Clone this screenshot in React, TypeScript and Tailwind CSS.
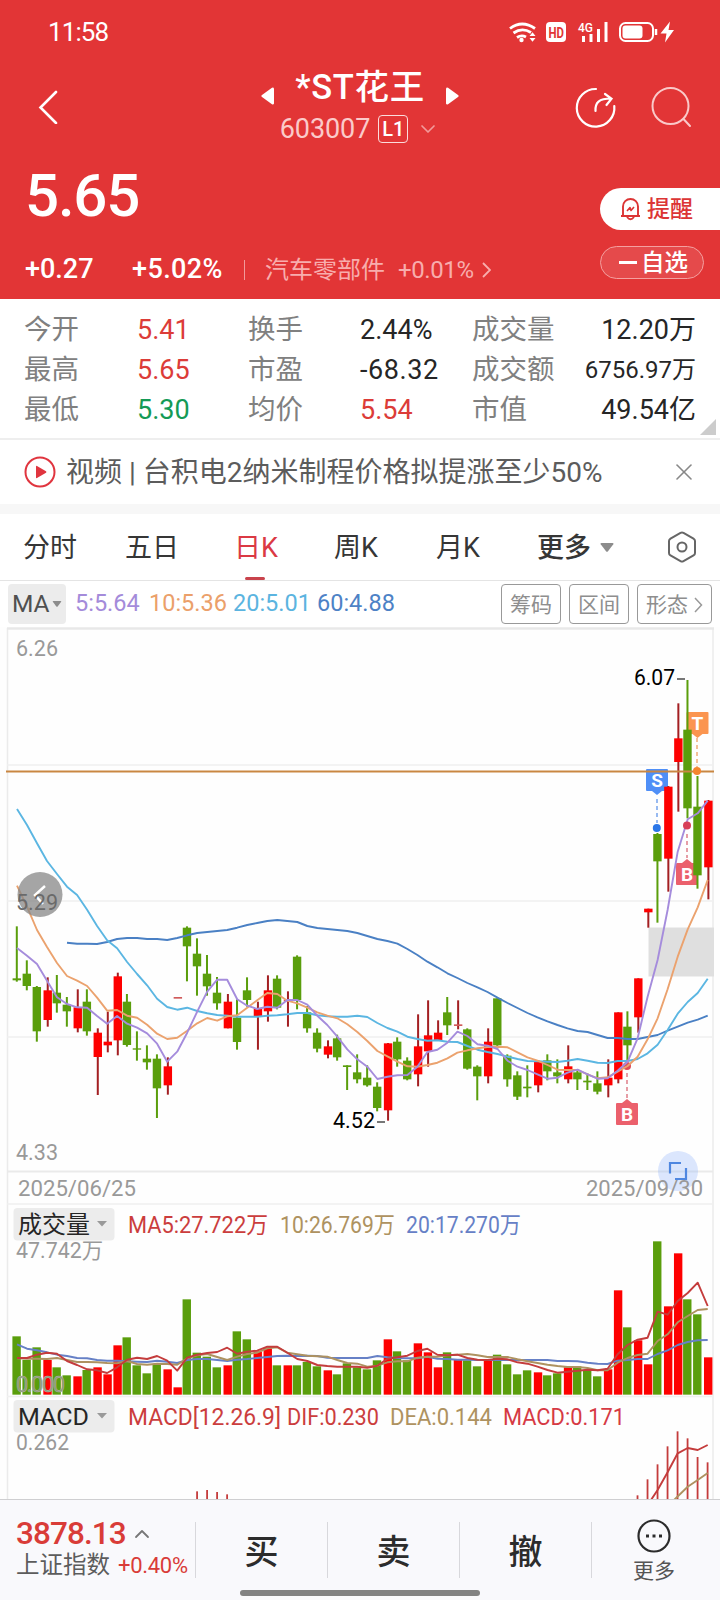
import type { ReactNode } from 'react'
import { ChevronDown, ChevronUp, X } from 'lucide-react'

const UP = '#fe0000'
const UP_WICK = '#a31f22'
const DOWN = '#5a9e0c'

const x = (i: number) => 17 + i * 10.01

// dir, high, body top, body bottom, low (chart ticks, a third of a pixel)
type Candle = [0 | 1, number, number, number, number]

const candles: Candle[] = [
  [0, 199, 355, 361, 365], [0, 301, 341, 378, 391], [0, 378, 381, 514, 545], [1, 352, 391, 480, 500],
  [0, 345, 398, 430, 458], [0, 411, 434, 454, 500], [1, 388, 442, 505, 517], [0, 388, 425, 514, 527],
  [1, 505, 518, 591, 705], [1, 455, 545, 556, 577], [1, 338, 349, 541, 586], [0, 402, 425, 555, 560],
  [0, 514, 565, 569, 602], [0, 556, 596, 607, 629], [0, 583, 596, 685, 774], [1, 592, 619, 676, 704],
  [1, 411, 411, 416, 416], [0, 199, 203, 259, 364], [0, 235, 281, 319, 407], [0, 285, 341, 379, 407],
  [0, 351, 398, 430, 449], [1, 402, 425, 505, 505], [0, 418, 473, 546, 569], [0, 352, 391, 420, 440],
  [1, 425, 445, 470, 569], [1, 346, 391, 454, 485], [0, 346, 356, 443, 448], [1, 394, 419, 424, 500],
  [0, 286, 290, 420, 448], [0, 438, 457, 505, 518], [0, 505, 518, 566, 577], [1, 541, 559, 584, 595],
  [0, 524, 535, 592, 602], [0, 616, 616, 621, 690], [0, 583, 637, 658, 670], [0, 616, 653, 676, 680],
  [0, 667, 680, 744, 754], [1, 549, 550, 751, 782], [0, 532, 545, 598, 620], [0, 592, 602, 658, 661],
  [1, 463, 559, 643, 679], [1, 421, 526, 574, 620], [1, 481, 518, 541, 541], [0, 411, 457, 496, 525],
  [1, 421, 493, 498, 508], [0, 505, 508, 626, 629], [0, 616, 620, 649, 721], [1, 505, 545, 649, 670],
  [0, 415, 415, 556, 566], [0, 583, 587, 658, 680], [0, 634, 646, 710, 720], [0, 616, 680, 685, 712],
  [1, 600, 604, 676, 697], [0, 583, 601, 634, 661], [0, 598, 637, 649, 670], [1, 556, 619, 658, 670],
  [0, 628, 637, 658, 690], [0, 640, 662, 667, 690], [0, 634, 670, 695, 703], [1, 598, 653, 676, 712],
  [1, 457, 457, 658, 670], [0, 454, 500, 556, 600], [1, 355, 355, 472, 518], [1, 146, 146, 157, 203],
  [0, -81, -78, 4, 188], [1, -222, -220, -4, 95], [1, -470, -365, -294, -145], [0, -540, -391, -155, -125],
  [0, -252, -160, 46, 86], [1, -180, -178, 22, 118],
]

const ma5 = [
  264, 287, 312, 362, 412, 432, 442, 443, 468, 491, 468, 491, 503, 520, 551, 605, 575, 518, 455, 395, 359, 359, 418,
  437, 447, 440, 443, 420, 420, 434, 467, 495, 530, 568, 598, 620, 657, 650, 646, 645, 620, 576, 569, 548, 515, 528,
  553, 557, 567, 602, 620, 630, 643, 656, 653, 638, 629, 643, 656, 655, 632, 605, 535, 410, 300, 150, -25, -122, -140,
  -178,
]
const ma10 = [
  77, 140, 210, 261, 309, 348, 362, 378, 413, 452, 450, 467, 473, 494, 521, 537, 533, 512, 490, 474, 482, 469, 466,
  443, 421, 399, 402, 422, 430, 443, 457, 467, 475, 493, 516, 543, 573, 589, 605, 619, 620, 615, 608, 595, 578, 571,
  565, 561, 560, 562, 577, 592, 602, 615, 629, 630, 630, 643, 655, 652, 635, 618, 590, 538, 475, 388, 290, 208, 142,
  60,
]
const ma20 = [
  -153, -105, -50, 3, 42, 80, 105, 149, 198, 241, 265, 306, 342, 376, 416, 441, 449, 443, 453, 460, 465, 467, 470, 470,
  470, 467, 466, 463, 459, 459, 466, 469, 470, 470, 467, 471, 489, 504, 515, 530, 537, 542, 541, 545, 546, 558, 569,
  576, 582, 590, 597, 603, 604, 605, 606, 602, 597, 602, 608, 609, 603, 603, 597, 580, 554, 510, 461, 426, 399, 356,
]
const ma60 = [
  248, 251, 251, 252, 246, 237, 234, 234, 237, 237, 240, 234, 226, 219, 216, 213, 210, 203, 195, 189, 183, 180, 183,
  186, 198, 204, 207, 210, 213, 219, 228, 237, 243, 251, 267, 285, 305, 322, 340, 354, 369, 382, 396, 413, 429, 444,
  459, 472, 484, 495, 505, 513, 516, 525, 534, 534, 537, 537, 531, 525, 512, 500, 488, 479, 467,
]

const volumes = [
  619, 690, 652, 690, 712, 736, 739, 720, 712, 733, 646, 622, 706, 730, 703, 718, 772, 508, 668, 680, 712, 706, 604,
  628, 665, 655, 706, 706, 706, 696, 709, 721, 733, 700, 712, 718, 691, 628, 664, 691, 640, 667, 712, 667, 688, 691,
  709, 688, 674, 703, 733, 721, 727, 736, 730, 712, 709, 721, 739, 718, 481, 592, 631, 703, 334, 529, 370, 508, 553,
  682,
]
const vol5 = [
  684, 684, 674, 668, 671, 693, 705, 718, 721, 729, 712, 689, 683, 687, 678, 692, 722, 683, 674, 669, 666, 653, 671,
  665, 662, 650, 650, 668, 687, 693, 705, 708, 710, 710, 710, 713, 707, 686, 682, 677, 663, 656, 674, 676, 674, 684,
  689, 690, 686, 688, 697, 701, 710, 720, 728, 725, 722, 719, 721, 716, 673, 645, 629, 623, 545, 554, 513, 489, 458,
  528,
]
const vol10 = [
  685, 686, 686, 687, 684, 690, 696, 696, 697, 699, 700, 693, 702, 704, 701, 702, 704, 685, 676, 672, 681, 690, 680,
  672, 668, 655, 652, 668, 673, 677, 679, 680, 690, 699, 701, 710, 707, 697, 694, 694, 683, 680, 680, 676, 674, 672,
  676, 681, 681, 681, 688, 694, 699, 704, 708, 711, 711, 714, 721, 721, 698, 684, 675, 671, 633, 613, 577, 558, 540,
  537,
]
const vol20 = [
  643, 656, 661, 667, 674, 678, 684, 685, 690, 692, 692, 694, 695, 696, 692, 695, 699, 690, 687, 687, 690, 693, 689,
  687, 684, 681, 678, 677, 678, 677, 678, 683, 684, 684, 684, 684, 678, 682, 684, 685, 685, 680, 686, 687, 689, 689,
  690, 690, 690, 690, 690, 690, 690, 690, 693, 693, 694, 698, 701, 702, 692, 690, 687, 687, 672, 661, 645, 636, 631,
  630,
]

// index, top
const macdBars = [
  [18, 304], [19, 300], [20, 306], [21, 313], [62, 316], [63, 268], [64, 223], [65, 169], [66, 124], [67, 145],
  [68, 201], [69, 217],
]

const toPoints = (values: number[], top: number, start = 0) =>
  values.map((v, i) => `${x(i + start).toFixed(1)},${(top + v / 3).toFixed(1)}`).join(' ')

function Line({ points, color, width = 1.9 }: { points: string; color: string; width?: number }) {
  return <polyline points={points} fill="none" stroke={color} strokeWidth={width} strokeLinejoin="round" />
}

type LabelProps = { x: number; y: number; w: number; size?: number; color?: string; children: ReactNode }

function Label({ x, y, w, size = 22, color = '#999', children }: LabelProps) {
  return (
    <text x={x} y={y} textLength={w} lengthAdjust="spacingAndGlyphs" fontSize={size} fill={color}>
      {children}
    </text>
  )
}

type MarkProps = { cx: number; y: number; letter: string; color: string; up?: boolean }

function Mark({ cx, y, letter, color, up }: MarkProps) {
  const tip = up ? `M${cx - 5} ${y}l5 -4l5 4z` : `M${cx - 5} ${y + 22}l5 4l5 -4z`
  return (
    <g>
      <rect x={cx - 11} y={y} width="22" height="22" rx="1" fill={color} />
      <path d={tip} fill={color} />
      <text x={cx} y={y + 17.5} textAnchor="middle" fontSize="19" fontWeight="700" fill="#fff">
        {letter}
      </text>
    </g>
  )
}

function Caret({ className = '' }: { className?: string }) {
  return (
    <svg viewBox="0 0 14 9" className={className} fill="currentColor">
      <path d="M1.5 0h11q1.5 0 .8 1.3L8 8.2q-1 1-2 0L.7 1.3Q0 0 1.5 0z" />
    </svg>
  )
}

function StatusBar() {
  return (
    <div className="flex h-16 items-center justify-between pl-12 pr-[46px] text-white">
      <span className="text-[26px] leading-none tracking-[-0.9px]">11:58</span>
      <svg width="166" height="24" viewBox="508 20 166 24" fill="none" stroke="#fff">
        <g strokeWidth="2.8">
          <path d="M510 28.5q12 -9 25 0M513.5 33q8.500 -6 17.500 -.5M517 37.500q4.500 -3 9 -.5" />
        </g>
        <circle cx="521.500" cy="40" r="2.200" fill="#fff" stroke="none" />
        <path d="M529.500 36l3 -3.800l3 3.800zM529.500 38l3 3.800l3 -3.800z" fill="#fff" stroke="none" />
        <rect x="546" y="22" width="20" height="20" rx="4" fill="#fff" stroke="none" />
        <text x="548.500" y="37.500" fontSize="14.500" fontWeight="700" textLength="15.500" lengthAdjust="spacingAndGlyphs" fill="#e23536" stroke="none">
          HD
        </text>
        <text x="578" y="32" fontSize="13" fontWeight="500" textLength="15" lengthAdjust="spacingAndGlyphs" fill="#fff" stroke="none">
          4G
        </text>
        <path d="M583.500 36v6M591 34v8M598.500 29v13M606 22v20" strokeWidth="3" />
        <rect x="620" y="23" width="33" height="18" rx="5.500" strokeWidth="2" />
        <rect x="622.500" y="25.500" width="20" height="13" rx="3" fill="#fff" stroke="none" />
        <path d="M656 29v6" strokeWidth="2.500" />
        <path d="M670 21.500l-9.500 12h6l-1.500 9l9 -12.500h-5.500z" fill="#fff" stroke="none" />
      </svg>
    </div>
  )
}

function TitleBar() {
  return (
    <div className="flex h-[86px] items-center justify-between pl-[38px] pr-[26px] text-white">
      <svg width="148" height="34" viewBox="0 -0.500 148 34" fill="none" stroke="currentColor" strokeWidth="2.600">
        <path d="M18 1.500L2.500 17L18 32.500" strokeLinecap="round" />
      </svg>
      <div className="flex flex-col items-center">
        <div className="flex h-11 items-center gap-[21px]">
          <svg width="13" height="18" viewBox="0 0 13 18" className="mt-[18px]" fill="currentColor">
            <path d="M13 1.500v15q-.5 1.500 -2 .7L1 10q-1.300 -1 0 -2L11 .8q1.500 -.8 2 .7z" />
          </svg>
          <h1 className="text-[34.500px] font-medium leading-none tracking-[0.7px]">*ST花王</h1>
          <svg width="13" height="18" viewBox="0 0 13 18" className="mt-[18px]" fill="currentColor">
            <path d="M0 1.500v15q.5 1.500 2 .7L12 10q1.300 -1 0 -2L2 .8q-1.500 -.8 -2 .7z" />
          </svg>
        </div>
        <div className="flex h-10 items-center text-[#fbcaca]">
          <span className="text-[27px] leading-none tracking-[-0.1px]">603007</span>
          <span className="ml-2 flex h-7 w-[30px] items-center justify-center rounded border-[1.5px] border-[#fbdcdc] text-[20px] font-medium leading-none text-white">
            L1
          </span>
          <ChevronDown className="ml-2 h-6 w-6 text-[#f29a9a]" strokeWidth={1.7} />
        </div>
      </div>
      <svg width="160" height="44" viewBox="534 85.500 160 44" fill="none" stroke="currentColor" strokeWidth="2.200" strokeLinecap="round">
        <path d="M596 89.500A18.800 18.800 0 1 0 614.300 106.500" />
        <path d="M595.500 111.500C595 103 599 99 611 99M605 94.500L611.500 99.200L606.500 105.500" />
        <circle cx="670.500" cy="106.500" r="18" stroke="#fac9c9" strokeWidth="2" />
        <path d="M683.500 119.500l6.500 7" stroke="#fac9c9" strokeWidth="2" />
      </svg>
    </div>
  )
}

function PriceHeader() {
  return (
    <div className="flex h-[149px] justify-between text-white">
      <div className="flex flex-col pl-[25px]">
        <div className="flex h-[89px] items-center pt-0.5 text-[60px] font-medium leading-none tracking-[-1.2px]">5.65</div>
        <div className="flex h-[60px] items-center pt-px">
          <span className="w-[107px] text-[27px] font-medium leading-none">+0.27</span>
          <span className="w-[112px] text-[27px] font-medium leading-none tracking-[0.4px]">+5.02%</span>
          <span className="h-5 w-px bg-[#f29a9a]" />
          <span className="ml-5 text-2xl leading-none text-[#f8adad]">汽车零部件</span>
          <span className="ml-[13px] text-2xl leading-none tracking-[-0.4px] text-[#f8adad]">+0.01%</span>
          <svg width="9" height="16" viewBox="0 0 9 16" className="ml-2" fill="none" stroke="#f8adad" strokeWidth="1.800">
            <path d="M1 1l7 7l-7 7" />
          </svg>
        </div>
      </div>
      <div className="flex flex-col items-start pt-[38px]">
        <button className="flex h-[42px] w-[120px] items-center rounded-l-full bg-white pl-5 text-[#dc3535]">
          <svg width="21" height="24" viewBox="0 0 21 24" fill="none" stroke="currentColor" strokeWidth="1.900" strokeLinejoin="round">
            <path d="M1 19h19M3 18.500v-9a7.500 7.500 0 0 1 15 0v9M7 20q3.500 4.500 7 0" />
            <path d="M7 14l3 -3.500l1 3l3 -3.500" strokeWidth="1.600" />
          </svg>
          <span className="ml-1.5 text-[23px] font-medium leading-none">提醒</span>
        </button>
        <button className="mt-4 flex h-[33px] w-[104px] items-center rounded-full border border-[#f4a0a0] bg-[#e54a4b] pl-[18px]">
          <span className="h-[2.5px] w-[18px] bg-white" />
          <span className="ml-1 pt-0.5 text-[23.500px] font-medium leading-none">自选</span>
        </button>
      </div>
    </div>
  )
}

const stats = [
  ['今开', '5.41', 'text-[#dc3c38]', '换手', '2.44%', 'text-[#262626]', '成交量', '12.20万', 'text-[27px]'],
  ['最高', '5.65', 'text-[#dc3c38]', '市盈', '-68.32', 'text-[#262626] tracking-[0.6px]', '成交额', '6756.97万', 'text-[24px]'],
  ['最低', '5.30', 'text-[#149a56]', '均价', '5.54', 'text-[#dc3c38]', '市值', '49.54亿', 'text-[27px]'],
]

function Stats() {
  return (
    <div className="relative h-[141px] border-b-2 border-[#eee] px-6 pt-[11px]">
      {stats.map(([a, av, ac, b, bv, bc, c, cv, cs]) => (
        <div key={c} className="flex h-10 items-center text-[27.500px] leading-none text-[#808080]">
          <span className="w-[113px]">{a}</span>
          <span className={`w-[111px] text-[27px] ${ac}`}>{av}</span>
          <span className="w-[112px]">{b}</span>
          <span className={`w-[112px] text-[27px] ${bc}`}>{bv}</span>
          <span>{c}</span>
          <span className={`ml-auto whitespace-nowrap text-[#262626] ${cs}`}>{cv}</span>
        </div>
      ))}
      <svg width="16" height="16" viewBox="0 0 16 16" className="absolute bottom-[3px] right-1" fill="#ccc">
        <path d="M16 0v16H0z" />
      </svg>
    </div>
  )
}

function NewsBar() {
  return (
    <div className="flex h-16 items-center pl-6 pr-[26px]">
      <svg width="32" height="32" viewBox="0 0 32 32" fill="none">
        <circle cx="16" cy="16" r="14.500" stroke="#e0353f" strokeWidth="2" />
        <path d="M12 10.500v11q0 1 1 .5l9 -5.200q.9 -.8 0 -1.600L13 10q-1 -.5 -1 .5z" fill="#e0353f" />
      </svg>
      <span className="ml-2.5 whitespace-nowrap pt-0.5 text-[28px] leading-none text-[#5c5c5c]">
        视频 | 台积电2纳米制程价格拟提涨至少50%
      </span>
      <X className="-mr-1 ml-auto h-7 w-7 text-[#888]" strokeWidth={1.4} />
    </div>
  )
}

const tabs = [
  ['分时', 'w-[102px]'],
  ['五日', 'w-[109px]'],
  ['日K', 'w-[100px]'],
  ['周K', 'w-[102px]'],
  ['月K', 'w-[101px]'],
]

function Tabs() {
  return (
    <div className="flex h-[67px] items-center border-b border-[#e4e4e4] pl-[23px] text-[27px] leading-none text-[#363636]">
      {tabs.map(([name, width]) => (
        <div key={name} className={`relative flex h-full items-center pt-[3px] ${width} ${name === '日K' ? 'text-[#db3944]' : ''}`}>
          {name}
          {name === '日K' && <i className="absolute bottom-0 left-[11px] h-[3px] w-5 rounded-sm bg-[#c9434c]" />}
        </div>
      ))}
      <span className="pt-[3px] font-medium">更多</span>
      <Caret className="ml-[9px] h-[9px] w-[14px] text-[#8c8c8c]" />
      <svg width="30" height="32" viewBox="0 0 30 32" className="ml-auto mr-[23px]" fill="none" stroke="#666" strokeWidth="2">
        <path d="M13.500 1.800q1.500 -.8 3 0l10 5.800q1.500 .9 1.500 2.500v11.800q0 1.600 -1.500 2.500l-10 5.800q-1.500 .8 -3 0l-10 -5.800q-1.500 -.9 -1.500 -2.500V10.100q0 -1.600 1.500 -2.500z" />
        <circle cx="15" cy="16" r="4.500" />
      </svg>
    </div>
  )
}

function MaBar() {
  return (
    <div className="flex h-[46px] items-center px-2 pb-[3px] pt-[3px]">
      <button className="flex h-10 w-[58px] items-center rounded bg-[#ececec] pl-1 text-[24.500px] leading-none text-[#505050]">
        MA
        <Caret className="ml-0.5 h-[6px] w-[10px] text-[#8c8c8c]" />
      </button>
      <div className="ml-[9px] flex whitespace-nowrap text-[23.500px] leading-none">
        <span className="w-[74px] text-[#a48bda]">5:5.64</span>
        <span className="w-[84px] text-[#eba06a]">10:5.36</span>
        <span className="w-[84px] text-[#5bb4e0]">20:5.01</span>
        <span className="text-[#4d82c6]">60:4.88</span>
      </div>
      <div className="ml-auto flex gap-2 text-[21px] leading-none text-[#8e8e8e]">
        <button className="h-10 w-[60px] rounded border border-[#999] pt-0.5">筹码</button>
        <button className="h-10 w-[60px] rounded border border-[#999] pt-0.5">区间</button>
        <button className="flex h-10 w-[75px] items-center rounded border border-[#999] pl-2 pt-0.5">
          形态
          <svg width="9" height="16" viewBox="0 0 9 16" className="ml-1.5" fill="none" stroke="#999" strokeWidth="1.500">
            <path d="M1 1l6.500 7L1 15" />
          </svg>
        </button>
      </div>
    </div>
  )
}

function Candles() {
  return (
    <>
      {candles.map(([dir, high, top, bottom, low], i) => {
        const cx = x(i) + (dir ? 0.7 : -0.2)
        const flat = i === 16 || i === 27 || i === 44
        return (
          <g key={i}>
            {i !== 16 && (
              <rect x={cx - 1} y={860 + high / 3} width="2" height={(low - high) / 3} fill={dir ? UP_WICK : DOWN} />
            )}
            <rect
              x={cx - 4.2}
              y={860 + top / 3}
              width="8.400"
              height={(bottom - top) / 3}
              fill={flat && dir ? '#d05a5a' : dir ? UP : DOWN}
            />
          </g>
        )
      })}
    </>
  )
}

function Charts() {
  return (
    <svg width="720" height="872" viewBox="0 627 720 872" className="block bg-[#fefefe]">
      <path d="M7.500 628V1499M713 628V1499" stroke="#ebebeb" strokeWidth="1.500" />
      <path d="M7 628.500H714" stroke="#e8e8e8" strokeWidth="2.500" />
      <path d="M7 765H713M7 901H713M7 1037H713M7 1204H713M7 1396.500H713" stroke="#f0f0f0" strokeWidth="1.500" />
      <path d="M7 1171.500H713" stroke="#eaeaea" strokeWidth="2" />

      <rect x="648.500" y="927.500" width="65.500" height="49" fill="#dfdfdf" />

      {/* trade marks sit below the candles */}
      <Mark cx={697.5} y={712} letter="T" color="#fb9550" />
      <Mark cx={657} y={769} letter="S" color="#4f8ff7" />
      <Mark cx={687} y={863} letter="B" color="#eb606c" up />
      <Mark cx={627} y={1103} letter="B" color="#eb606c" up />
      <g strokeWidth="1.600" strokeDasharray="4 3" fill="none">
        <path d="M697 738V767" stroke="#f0b080" />
        <path d="M657 799V823" stroke="#7ea9ee" />
        <path d="M687 834V858" stroke="#e08590" />
        <path d="M627 1073V1099" stroke="#e08590" />
      </g>
      <circle cx="627" cy="1066" r="4" fill="#e04a55" />
      <Candles />
      <Line points={toPoints(ma60, 860, 5)} color="#4a80c4" />
      <Line points={toPoints(ma20, 860)} color="#5bb6e2" />
      <Line points={toPoints(ma10, 860)} color="#eba26e" />
      <Line points={toPoints(ma5, 860)} color="#a58cdc" />
      <path d="M6 771.500H714" stroke="#c98742" strokeWidth="2" />
      <circle cx="697" cy="771" r="4" fill="#f5852f" />
      <circle cx="656.800" cy="828" r="4" fill="#2a76e8" />
      <circle cx="687" cy="825.500" r="4" fill="#d83f58" />

      <path d="M677 679h8M377 1122h8" stroke="#777" strokeWidth="1.800" />
      <Label x={634} y={685} w={41} color="#000">6.07</Label>
      <Label x={333} y={1128} w={42} color="#000">4.52</Label>
      <Label x={16} y={656} w={42}>6.26</Label>
      <Label x={16} y={1160} w={42}>4.33</Label>

      <circle cx="40" cy="894.500" r="22.500" fill="#878787" fillOpacity=".75" />
      <path d="M45 886l-10 9l8 9" fill="none" stroke="#fff" strokeWidth="2.500" />
      <Label x={16} y={910} w={42} color="#6a6a6a">5.29</Label>

      <circle cx="678" cy="1171" r="20" fill="#dbe6fd" />
      <path d="M658 1171.500h40" stroke="#ced9ee" strokeWidth="2" />
      <path d="M670 1173.500v-10.500h11M686 1168v11h-11" fill="none" stroke="#4f87e0" strokeWidth="2.200" />
      <Label x={18} y={1196} w={118}>2025/06/25</Label>
      <Label x={586} y={1196} w={117}>2025/09/30</Label>

      {/* volume */}
      <rect x="13.500" y="1208" width="101" height="32.500" rx="4" fill="#ececec" />
      <Label x={18} y={1233} w={72} size={24} color="#262626">成交量</Label>
      <path d="M97 1221h10l-5 5.500z" fill="#999" />
      <Label x={128} y={1233} w={140} size={23} color="#cb3d3d">MA5:27.722万</Label>
      <Label x={280} y={1233} w={115} size={23} color="#ae9260">10:26.769万</Label>
      <Label x={406} y={1233} w={115} size={23} color="#6680c6">20:17.270万</Label>
      <Label x={16} y={1258} w={87}>47.742万</Label>
      {volumes.map((top, i) => (
        <rect
          key={i}
          x={x(i) + (candles[i][0] ? 0.5 : -0.4) - 4.2}
          y={1130 + top / 3}
          width="8.400"
          height={(794 - top) / 3}
          fill={candles[i][0] ? UP : DOWN}
        />
      ))}
      <Line points={toPoints(vol20, 1130)} color="#6680c6" />
      <Line points={toPoints(vol10, 1130)} color="#ae9260" />
      <Line points={toPoints(vol5, 1130)} color="#c43c3c" />
      <text x="16" y="1392" textLength="49" fontSize="22" fill="#8c9c6c" stroke="#aaa" strokeWidth=".6">
        0.000
      </text>

      {/* macd */}
      <rect x="13.500" y="1400" width="101" height="32.500" rx="4" fill="#ececec" />
      <Label x={18} y={1425} w={71} size={24} color="#262626">MACD</Label>
      <path d="M97 1413h10l-5 5.500z" fill="#999" />
      <Label x={128} y={1425} w={153} size={23} color="#cb3d3d">MACD[12.26.9]</Label>
      <Label x={287} y={1425} w={92} size={23} color="#cb3d3d">DIF:0.230</Label>
      <Label x={390} y={1425} w={102} size={23} color="#ae9260">DEA:0.144</Label>
      <Label x={503} y={1425} w={122} size={23} color="#d63a44">MACD:0.171</Label>
      <Label x={16} y={1450} w={53}>0.262</Label>
      {macdBars.map(([i, top]) => (
        <rect key={i} x={x(i) - 1} y={1390 + top / 3} width="1.800" height={(330 - top) / 3} fill="#c43c3c" />
      ))}
      <Line points={`651,1500 ${toPoints([300, 247, 190, 174, 180, 165], 1390, 64)}`} color="#c43c3c" />
      <Line points={`674,1500 ${toPoints([290, 270, 249], 1390, 67)}`} color="#ae9260" />
    </svg>
  )
}

function BottomBar() {
  return (
    <div className="h-[101px] border-t border-[#cfcfd1] bg-[#f9f9fc]">
      <div className="flex h-[90px] pt-[22px]">
        <div className="-mt-1 flex w-[195px] flex-col whitespace-nowrap pl-4">
          <div className="flex h-8 items-center text-[31.500px] font-medium leading-none tracking-[-0.9px] text-[#d93c38]">
            3878.13
            <ChevronUp className="ml-1 h-6 w-6 text-[#777]" strokeWidth={1.8} />
          </div>
          <div className="flex h-8 items-center text-[23.500px] leading-none text-[#5c5c5c]">
            上证指数
            <span className="ml-2 text-[22px] tracking-[-0.3px] text-[#d93c38]">+0.40%</span>
          </div>
        </div>
        {['买', '卖', '撤'].map((name) => (
          <div
            key={name}
            className="flex h-14 w-[132px] items-center justify-center border-l border-[#d8d8dc] pt-1 text-[34px] font-medium leading-none text-[#2c2c2c]"
          >
            {name}
          </div>
        ))}
        <div className="flex h-14 flex-1 flex-col items-center border-l border-[#d8d8dc] pr-1 text-[21px] leading-none text-[#555]">
          <svg width="34" height="34" viewBox="0 0 34 34" className="-mt-[3px] mb-2 shrink-0" fill="none" stroke="#2c2c2c" strokeWidth="2.200">
            <circle cx="17" cy="17" r="15.500" />
            <path d="M9 17h3M15.500 17h3M22 17h3" strokeWidth="3" />
          </svg>
          更多
        </div>
      </div>
      <div className="mx-auto h-[6px] w-[240px] rounded-full bg-[#828282]" />
    </div>
  )
}

export default function App() {
  return (
    <div className="h-[1600px] w-[720px] overflow-hidden bg-white font-['Roboto','Noto_Sans_CJK_SC',sans-serif]">
      <header className="h-[299px] bg-[#e23536]">
        <StatusBar />
        <TitleBar />
        <PriceHeader />
      </header>
      <Stats />
      <NewsBar />
      <div className="h-[10px] bg-[#f7f7f7]" />
      <Tabs />
      <MaBar />
      <Charts />
      <BottomBar />
    </div>
  )
}
